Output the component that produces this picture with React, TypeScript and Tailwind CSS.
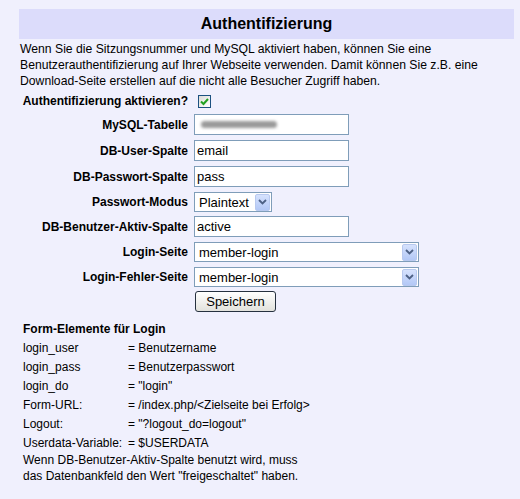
import React from 'react'

const font = { fontFamily: '"Liberation Sans", Arial, sans-serif' }

const Row: React.FC<{ label: string; className?: string; children: React.ReactNode }> = ({ label, className = '', children }) => (
    <div className={'flex items-center ' + className}>
        <div className="w-[169px] shrink-0 text-right text-[12px] font-bold leading-none">{label}</div>
        <div className="ml-[6px] flex items-center">{children}</div>
    </div>
)

const TextInput: React.FC<{ value?: string; children?: React.ReactNode }> = ({ value, children }) => (
    <div className="flex h-[21px] w-[155px] items-center overflow-hidden border border-[#7f9db9] bg-white px-[2px] text-[13px] leading-none">
        {children ?? value}
    </div>
)

const Arrow = () => (
    <span className="mr-px flex h-[17px] w-[15px] shrink-0 items-center justify-center rounded-[2px] border border-[#b8c9ef] bg-gradient-to-b from-[#d6e2fd] to-[#b3c8f6]">
        <svg width="9" height="6" viewBox="0 0 9 6">
            <path d="M1 1 L4.5 4.5 L8 1" fill="none" stroke="#4d6185" strokeWidth="1.8" />
        </svg>
    </span>
)

const Select: React.FC<{ value: string; width: string }> = ({ value, width }) => (
    <div className={'flex h-[20px] items-center justify-between border border-[#7f9db9] bg-white pl-[4px] text-[13px] leading-none ' + width}>
        <span>{value}</span>
        <Arrow />
    </div>
)

const formRows: [string, string][] = [
    ['login_user', '= Benutzername'],
    ['login_pass', '= Benutzerpasswort'],
    ['login_do', '= "login"'],
    ['Form-URL:', '= /index.php/<Zielseite bei Erfolg>'],
    ['Logout:', '= "?logout_do=logout"'],
    ['Userdata-Variable:', '= $USERDATA'],
]

const App: React.FC = () => {
    return (
        <div className="min-h-screen w-full bg-[#f0f0fd] pl-[19px] pr-[6px] pt-[9px] text-black" style={font}>
            {/* Kopfzeile */}
            <div className="flex h-[30px] items-center justify-center bg-[#dcdcfb] text-[16px] font-bold">
                Authentifizierung
            </div>

            <p className="mt-[2px] pl-px text-[12.2px] leading-[16px]">
                Wenn Sie die Sitzungsnummer und MySQL aktiviert haben, können Sie eine Benutzerauthentifizierung auf Ihrer
                Webseite verwenden. Damit können Sie z.B. eine Download-Seite erstellen auf die nicht alle Besucher Zugriff haben.
            </p>

            {/* Formular */}
            <div className="mt-[2px] flex flex-col">
                <Row label="Authentifizierung aktivieren?" className="h-[20px]">
                    <span className="ml-[4px] flex h-[13px] w-[13px] items-center justify-center border border-[#1c5180] bg-gradient-to-br from-[#dcdcd7] to-white">
                        <svg width="9" height="9" viewBox="0 0 9 9">
                            <path d="M1 4.5 L3.5 7 L8 2" fill="none" stroke="#21a121" strokeWidth="2" />
                        </svg>
                    </span>
                </Row>
                <Row label="MySQL-Tabelle" className="mt-[3px]">
                    <TextInput>
                        {/* unkenntlich gemachter Tabellenname */}
                        <span className="ml-[4px] h-[7px] w-[76px] rounded-full bg-[#9a9a9a] blur-[1.5px]" />
                    </TextInput>
                </Row>
                <Row label="DB-User-Spalte" className="mt-[5px]">
                    <TextInput value="email" />
                </Row>
                <Row label="DB-Passwort-Spalte" className="mt-[5px]">
                    <TextInput value="pass" />
                </Row>
                <Row label="Passwort-Modus" className="mt-[5px]">
                    <Select value="Plaintext" width="w-[78px]" />
                </Row>
                <Row label="DB-Benutzer-Aktiv-Spalte" className="mt-[4px]">
                    <TextInput value="active" />
                </Row>
                <Row label="Login-Seite" className="mt-[5px]">
                    <Select value="member-login" width="w-[225px]" />
                </Row>
                <Row label="Login-Fehler-Seite" className="mt-[5px]">
                    <Select value="member-login" width="w-[225px]" />
                </Row>
                <Row label="" className="mt-[4px]">
                    <button className="ml-px flex h-[21px] w-[81px] items-center justify-center rounded-[3px] border border-[#26313f] bg-gradient-to-b from-white to-[#e2e2dc] text-[13px] leading-none">
                        Speichern
                    </button>
                </Row>
            </div>

            {/* Hinweise */}
            <div className="mt-[7px] pl-[4px] text-[12px]">
                <div className="flex h-[19px] items-center font-bold">Form-Elemente für Login</div>
                {formRows.map(([k, v]) => (
                    <div key={k} className="flex h-[19px] items-center">
                        <span className="w-[105px] shrink-0">{k}</span>
                        <span>{v}</span>
                    </div>
                ))}
                <p className="leading-[16px]">
                    Wenn DB-Benutzer-Aktiv-Spalte benutzt wird, muss
                    <br />
                    das Datenbankfeld den Wert "freigeschaltet" haben.
                </p>
            </div>
        </div>
    )
}

export default App
